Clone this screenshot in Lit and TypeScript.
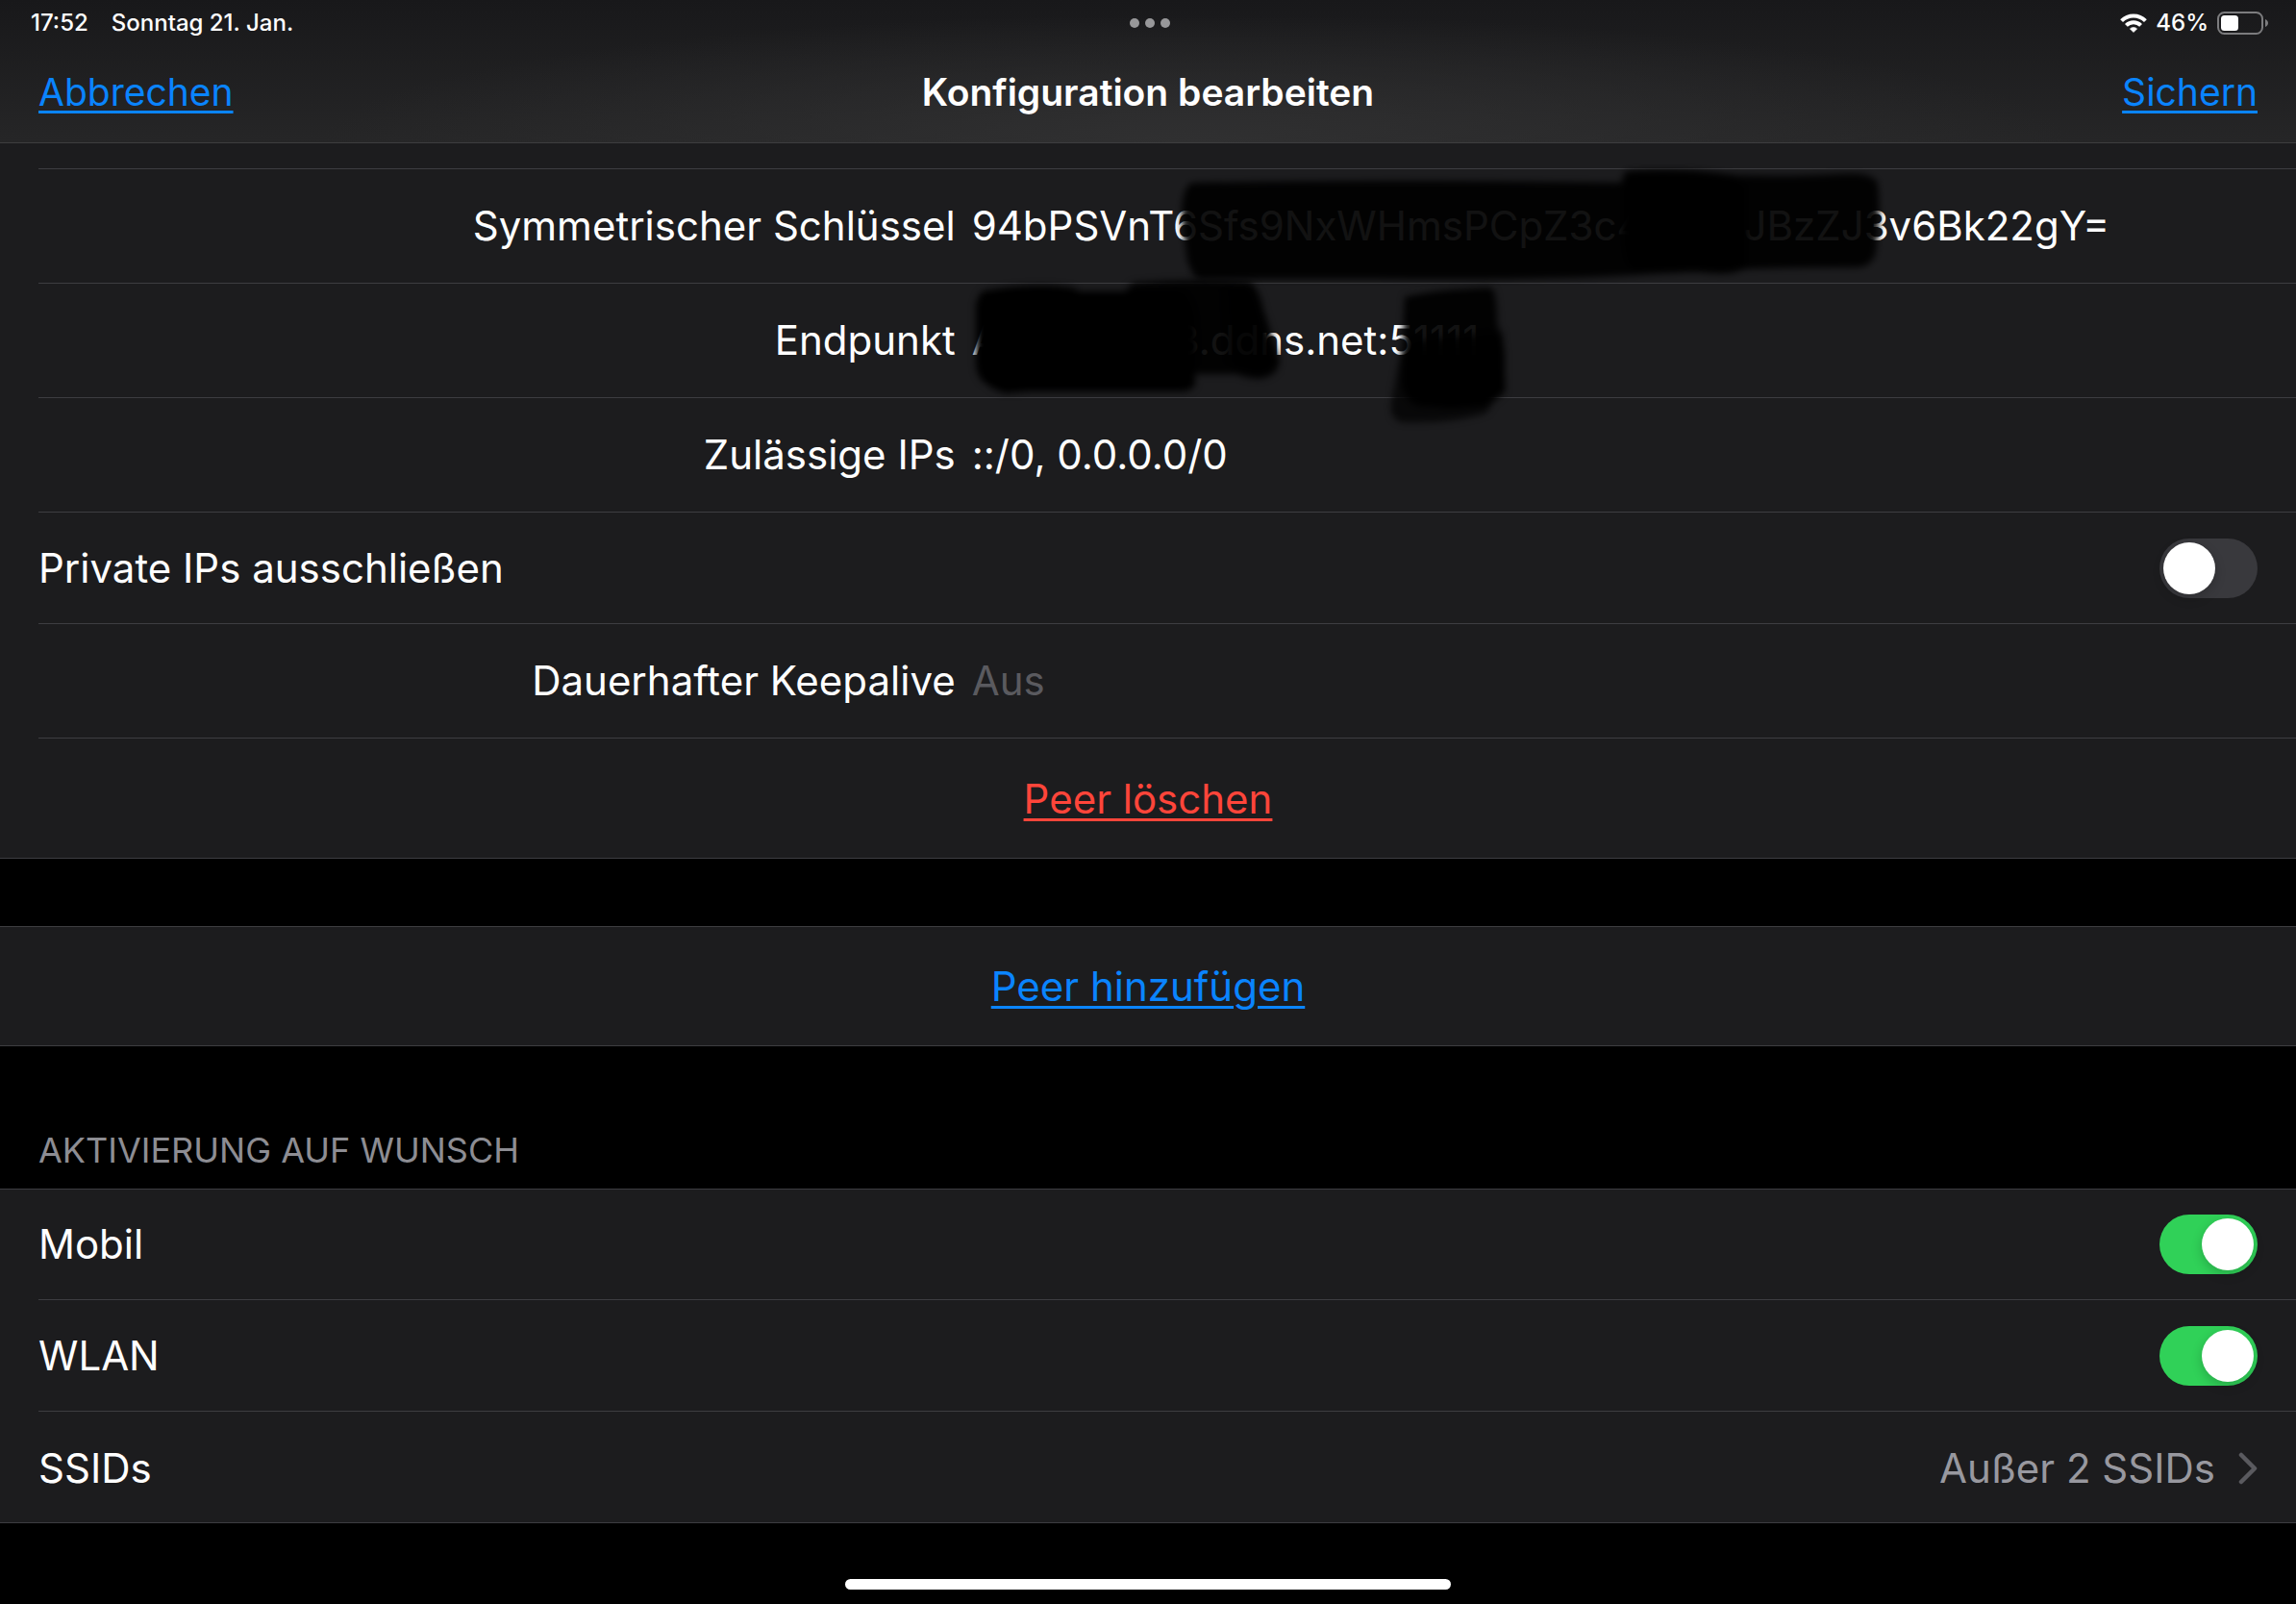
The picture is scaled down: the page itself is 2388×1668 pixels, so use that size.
import { LitElement, html, css, svg, nothing } from "lit";
import { customElement, property } from "lit/decorators.js";

/** Resets shared by every element on the sheet. */
const base = css`
  * {
    box-sizing: border-box;
  }
  a,
  button,
  input {
    font: inherit;
    color: inherit;
  }
`;

@customElement("status-bar")
class StatusBar extends LitElement {
  static styles = [
    base,
    css`
      :host {
        display: grid;
        grid-template-columns: 1fr auto 1fr;
        align-items: center;
        height: 48px;
        padding: 0 29px 0 32px;
        font-size: 24px;
        font-weight: 500;
        line-height: 48px;
      }
      .left {
        display: flex;
        gap: 24px;
      }
      .dots {
        display: flex;
        gap: 6px;
      }
      .dot {
        width: 10px;
        height: 10px;
        border-radius: 50%;
        background: #98989a;
      }
      .right {
        display: flex;
        justify-content: flex-end;
        align-items: center;
        gap: 9px;
      }
      svg {
        display: block;
      }
    `,
  ];

  render() {
    return html`
      <div class="left"><span>17:52</span><span>Sonntag 21. Jan.</span></div>
      <div class="dots">
        <span class="dot"></span><span class="dot"></span><span class="dot"></span>
      </div>
      <div class="right">
        <svg width="28" height="20" viewBox="0 0 28 20" fill="none" stroke="#fff" stroke-width="4">
          <path d="M1.6 7.6a17.5 17.5 0 0 1 24.8 0" />
          <path d="M6.4 12.4a10.8 10.8 0 0 1 15.2 0" />
          <path
            d="M14 19.6l-3.7-3.7a5.3 5.3 0 0 1 7.4 0z"
            fill="#fff"
            stroke="#fff"
            stroke-width=".6"
          />
        </svg>
        <span>46%</span>
        <svg width="53" height="24" viewBox="0 0 53 24">
          <rect x="1" y="1" width="46" height="22" rx="6.5" fill="none" stroke="#7c7c7e" stroke-width="2" />
          <rect x="4" y="4" width="18" height="16" rx="3.5" fill="#fff" />
          <path d="M50 8c4 1.6 4 6.4 0 8z" fill="#7c7c7e" />
        </svg>
      </div>
    `;
  }
}

@customElement("toggle-row")
class ToggleRow extends LitElement {
  @property() label = "";
  @property({ type: Boolean }) on = false;

  static styles = [
    base,
    css`
      :host {
        display: block;
      }
      .row {
        display: flex;
        align-items: center;
        justify-content: space-between;
        height: 115px;
        padding-right: 40px;
      }
      .switch {
        appearance: none;
        display: flex;
        width: 102px;
        height: 62px;
        margin: 0;
        padding: 4px;
        border-radius: 31px;
        background: #39393d;
      }
      .switch::before {
        content: "";
        width: 54px;
        height: 54px;
        border-radius: 50%;
        background: #fff;
        box-shadow: 0 4px 12px rgba(0, 0, 0, 0.2);
      }
      .switch:checked {
        justify-content: flex-end;
        background: #30d158;
      }
    `,
  ];

  render() {
    return html`
      <div class="row">
        <label for="switch">${this.label}</label>
        <input id="switch" class="switch" type="checkbox" role="switch" .checked=${this.on} />
      </div>
    `;
  }
}

@customElement("field-row")
class FieldRow extends LitElement {
  @property() label = "";
  @property() value = "";
  @property() placeholder = "";
  @property() mark = "";

  static styles = [
    base,
    css`
      :host {
        display: block;
      }
      .row {
        display: grid;
        grid-template-columns: calc(41% - 9px) 1fr;
        column-gap: 17px;
        align-items: center;
        height: 118px;
      }
      label {
        text-align: right;
      }
      .field {
        position: relative;
        display: flex;
        align-items: center;
        height: 118px;
      }
      input {
        width: 100%;
        padding: 0;
        border: 0;
        outline: 0;
        background: none;
      }
      input::placeholder {
        color: #5a5a5f;
        opacity: 1;
      }
      /* Marker strokes lie over the text and spill past the row. */
      .marks {
        position: absolute;
        left: 0;
        top: 0;
        z-index: 1;
        overflow: visible;
        pointer-events: none;
      }
    `,
  ];

  private marks() {
    const shapes =
      this.mark === "key"
        ? svg`
            <path opacity=".93" d="M230 14Q420 10 680 14H806V104Q740 107 690 110Q580 116 420 114H236Q224 108 222 80Q214 40 222 22Q224 15 230 14Z"/>
            <path d="M680 2Q740 -2 794 6Q802 20 802 60V104Q790 111 756 107H690Q676 104 676 60V10Z"/>
            <path opacity=".93" d="M790 6Q850 8 900 5Q936 2 942 14Q946 50 940 86Q936 102 920 102Q860 102 790 104Z"/>`
        : this.mark === "host"
          ? svg`
            <path d="M10 8Q60 -2 104 4L112 8H216Q232 14 232 50V104Q230 112 216 112H60L34 114Q4 104 4 84V20Z"/>
            <path opacity=".93" d="M168 -1Q230 -6 288 -2Q298 2 304 30L320 80Q318 98 296 98L276 94H200L160 6Z"/>
            <path opacity=".6" d="M262 2Q290 -4 296 8L318 80Q316 99 296 99Q270 98 266 80Z"/>
            <path opacity=".93" d="M450 14Q480 6 540 4Q546 8 546 40L554 70V110Q546 124 530 128H470Q448 126 446 100Z"/>
            <path opacity=".7" d="M446 70L552 60L554 106Q540 124 536 134Q500 146 446 144Q434 140 436 124Z"/>
            <path opacity=".8" d="M456 60L552 50L555 112Q540 128 500 130Q466 130 456 110Z"/>`
          : nothing;
    return shapes === nothing
      ? nothing
      : html`<svg class="marks" width="960" height="118" viewBox="0 0 960 118" aria-hidden="true">
          <filter id="soft" x="-5%" y="-15%" width="110%" height="130%">
            <feGaussianBlur stdDeviation="3.5" />
          </filter>
          <g filter="url(#soft)">${shapes}</g>
        </svg>`;
  }

  render() {
    return html`
      <div class="row">
        <label for="field">${this.label}</label>
        <div class="field">
          <input
            id="field"
            type="text"
            spellcheck="false"
            .value=${this.value}
            placeholder=${this.placeholder}
          />
          ${this.marks()}
        </div>
      </div>
    `;
  }
}

@customElement("app-root")
class AppRoot extends LitElement {
  static styles = [
    base,
    css`
      :host {
        display: flex;
        flex-direction: column;
        min-height: 100vh;
        background: #000;
        color: #fff;
        font-family: Inter, "Liberation Sans", sans-serif;
        font-size: 42px;
        line-height: 56px;
        overflow: hidden;
      }
      header {
        border-bottom: 1px solid #3d3d3f;
        background: radial-gradient(ellipse 38% 90% at 52% 100%, #303031, rgba(48, 48, 49, 0)),
          linear-gradient(#18181a, #262627);
      }
      .bar {
        display: grid;
        grid-template-columns: 1fr auto 1fr;
        align-items: center;
        height: 100px;
        padding: 0 40px 4px;
        font-size: 39px;
      }
      h1 {
        margin: 0;
        font-size: 39px;
        font-weight: 600;
      }
      a {
        color: #0a84ff;
        text-decoration: underline;
        text-decoration-thickness: 3px;
        text-underline-offset: 5px;
      }
      .end {
        justify-self: end;
      }
      .group {
        padding-left: 40px;
        border-bottom: 1px solid #3d3d41;
        background: #1c1c1e;
      }
      .framed {
        box-shadow: inset 0 1px #3d3d41;
      }
      .continued {
        padding-top: 26px;
      }
      .line {
        border-top: 1px solid #3d3d41;
      }
      .action {
        display: flex;
        align-items: center;
        justify-content: center;
        height: 124px;
        padding: 2px 40px 0 0;
      }
      .danger {
        color: #ff453a;
      }
      .line.action {
        height: 125px;
      }
      .spacer {
        height: 70px;
      }
      h2 {
        margin: 0;
        padding: 86px 40px 18px;
        color: #8d8d93;
        font-size: 36px;
        font-weight: 400;
        line-height: 44px;
      }
      .link-row {
        display: flex;
        align-items: center;
        justify-content: space-between;
        width: 100%;
        height: 115px;
        padding: 2px 40px 0 0;
        border: 0;
        background: none;
        text-align: left;
      }
      .detail {
        display: flex;
        align-items: center;
        gap: 24px;
        color: #98989f;
      }
      .home {
        display: flex;
        flex: 1;
        align-items: flex-end;
        justify-content: center;
        padding-bottom: 15px;
      }
      .home-bar {
        width: 630px;
        height: 11px;
        border-radius: 6px;
        background: #fff;
      }
    `,
  ];

  render() {
    return html`
      <header>
        <status-bar></status-bar>
        <nav class="bar">
          <a href="#cancel">Abbrechen</a>
          <h1>Konfiguration bearbeiten</h1>
          <a class="end" href="#save">Sichern</a>
        </nav>
      </header>
      <main>
        <section class="group continued">
          <field-row
            class="line"
            label="Symmetrischer Schlüssel"
            value=${"94bPSVnT6Sfs9NxWHmsPCpZ3c4\u2003\u2003\u2002JBzZJ3v6Bk22gY="}
            mark="key"
          ></field-row>
          <field-row
            class="line"
            label="Endpunkt"
            value=${"A\u2003\u2003\u2003\u2003\u20043.ddns.net:51111"}
            mark="host"
          ></field-row>
          <field-row class="line" label="Zulässige IPs" value="::/0, 0.0.0.0/0"></field-row>
          <toggle-row class="line" label="Private IPs ausschließen"></toggle-row>
          <field-row class="line" label="Dauerhafter Keepalive" placeholder="Aus"></field-row>
          <div class="line action"><a class="danger" href="#delete-peer">Peer löschen</a></div>
        </section>
        <div class="spacer"></div>
        <section class="group framed">
          <div class="action"><a href="#add-peer">Peer hinzufügen</a></div>
        </section>
        <h2>AKTIVIERUNG AUF WUNSCH</h2>
        <section class="group framed">
          <toggle-row label="Mobil" on></toggle-row>
          <toggle-row class="line" label="WLAN" on></toggle-row>
          <div class="line">
            <button class="link-row" type="button">
              <span>SSIDs</span>
              <span class="detail">
                Außer 2 SSIDs
                <svg width="20" height="34" viewBox="0 0 20 34" fill="none" stroke="#5a5a5f" stroke-width="4.5" stroke-linecap="round" stroke-linejoin="round">
                  <path d="M3 3l14 14L3 31" />
                </svg>
              </span>
            </button>
          </div>
        </section>
      </main>
      <div class="home"><div class="home-bar"></div></div>
    `;
  }
}
